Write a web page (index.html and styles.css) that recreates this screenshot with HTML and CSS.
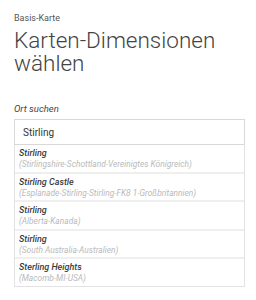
FILE: index.html
```html
<!DOCTYPE html>
<html lang="de">
<head>
  <meta charset="UTF-8" />
  <title>Karten-Dimensionen wählen</title>
  <link rel="stylesheet" href="styles.css">
</head>
<body>
  <div class="page">
    <div class="crumb">Basis-Karte</div>
    <h1>Karten-Dimensionen wählen</h1>

    <label class="search-label" for="place">Ort suchen</label>
    <div class="search">
      <input id="place" class="search-input" type="text" value="Stirling">
      <ul class="results">
        <li class="result">
          <span class="result-name">Stirling</span>
          <span class="result-region">(Stirlingshire-Schottland-Vereinigtes Königreich)</span>
        </li>
        <li class="result">
          <span class="result-name">Stirling Castle</span>
          <span class="result-region">(Esplanade-Stirling-Stirling-FK8 1-Großbritannien)</span>
        </li>
        <li class="result">
          <span class="result-name">Stirling</span>
          <span class="result-region">(Alberta-Kanada)</span>
        </li>
        <li class="result">
          <span class="result-name">Stirling</span>
          <span class="result-region">(South Australia-Australien)</span>
        </li>
        <li class="result">
          <span class="result-name">Sterling Heights</span>
          <span class="result-region">(Macomb-MI-USA)</span>
        </li>
      </ul>
    </div>
  </div>
</body>
</html>
```

FILE: styles.css
```css
* {
  box-sizing: border-box;
}

body {
  margin: 0;
  background: #fff;
  font-family: Roboto, 'Liberation Sans', sans-serif;
  color: #333;
}

.page {
  padding: 13px 11px 0 14px;
}

.crumb {
  font-size: 9px;
  line-height: 11px;
  color: #555;
}

h1 {
  margin: 5px 0 0;
  font-size: 22.5px;
  line-height: 23px;
  font-weight: 300;
  color: #444;
}

.search-label {
  display: block;
  margin-top: 28px;
  font-size: 9.5px;
  line-height: 12px;
  font-style: italic;
  color: #444;
}

.search {
  margin-top: 4px;
}

.search-input {
  display: block;
  width: 100%;
  height: 26px;
  margin: 0;
  padding: 0 8px;
  border: 1px solid #d8d8d8;
  font-family: inherit;
  font-size: 10px;
  color: #333;
  outline: none;
}

.results {
  list-style: none;
  margin: 0;
  padding: 0;
  border: 1px solid #e2e2e2;
  border-top: none;
}

.result {
  display: flex;
  flex-direction: column;
  padding: 3px 4px 1.5px;
  font-style: italic;
  font-size: 9px;
  line-height: 11px;
}

.result + .result {
  border-top: 2px solid #efefef;
}

.result-name {
  color: #3a3a3a;
  font-weight: 500;
}

.result-region {
  color: #bababa;
  font-size: 8.4px;
}
```
